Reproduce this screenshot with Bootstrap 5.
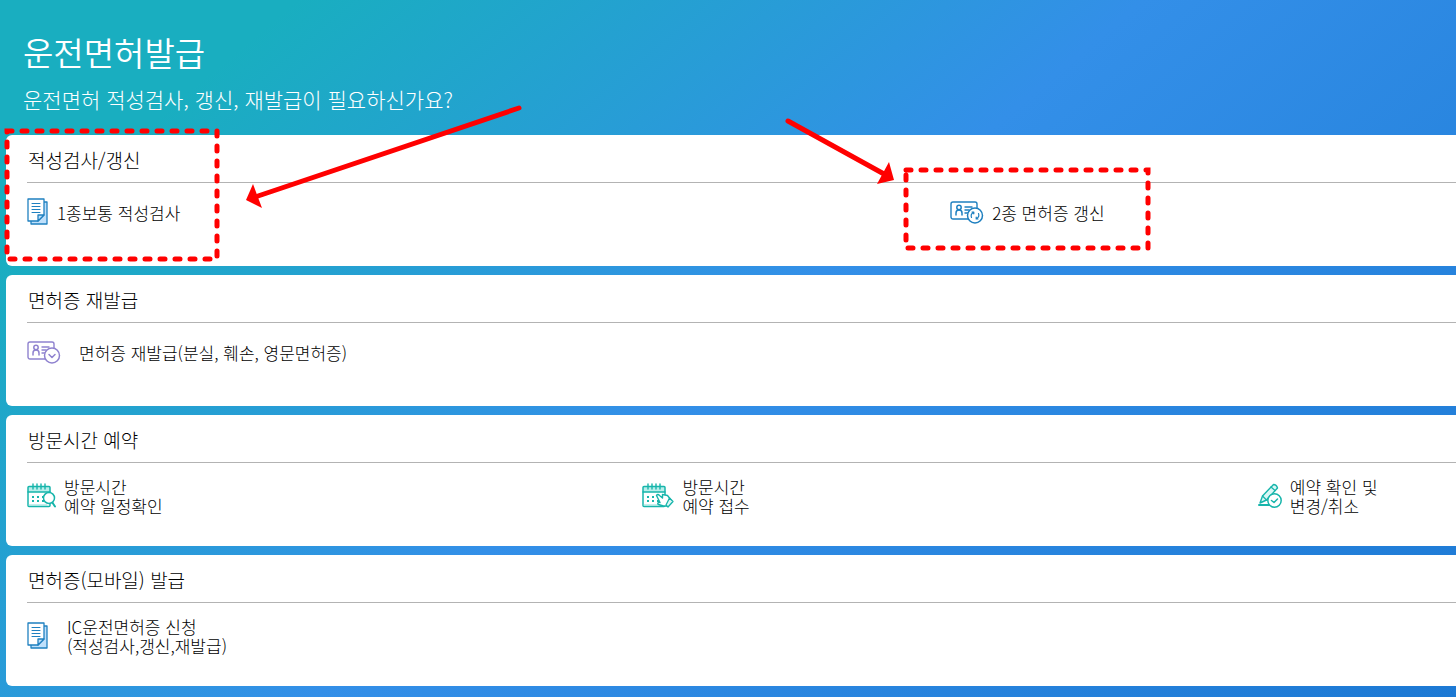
<!DOCTYPE html>
<html lang="ko">
<head>
<meta charset="utf-8">
<meta name="viewport" content="width=device-width, initial-scale=1">
<title>운전면허발급</title>
<link href="https://cdn.jsdelivr.net/npm/bootstrap@5.3.0/dist/css/bootstrap.min.css" rel="stylesheet">
<style>
  body { font-family: "Noto Sans CJK KR", sans-serif; font-weight: 300; color: #000; overflow-x: hidden; }
  .issue-page { background: linear-gradient(140deg, #19aec0 0%, #19aec0 13%, #338fe8 50%, #1c79d4 100%); padding: 30px 0 10px 6px; min-height: 100vh; }
  .issue-head { padding: 0 17px 21px; }
  .page-title { font-size: 33px; line-height: 44px; font-weight: 350; margin-bottom: 10px; }
  .page-desc { font-size: 21px; line-height: 30px; }
  .card-stack { gap: 9px; }
  .service-card { border: 0; border-radius: 6px 0 0 6px; min-height: 131px; padding: 7px 0 16px 21px; }
  .service-title { font-size: 19px; line-height: 36px; font-weight: 300; height: 41px; border-bottom: 1px solid #b3b3b3; margin: 0; padding-left: 1px; }
  /* the items are spread over a track wider than the visible card */
  .service-row { width: 129.2%; padding-top: 14px; }
  .service-link { color: #000; text-decoration: none; font-size: 17px; line-height: 19px; min-height: 30px; }
  .gap-wide { gap: 18px; }
  .ico { flex: none; fill: none; stroke: currentColor; stroke-linecap: round; stroke-linejoin: round; }
  .ico-blue { color: #1f80c0; }
  .ico-violet { color: #8f82cf; }
  .ico-teal { color: #17b5ab; }
  .marks { pointer-events: none; z-index: 2; }
</style>
</head>
<body>
<svg class="d-none" xmlns="http://www.w3.org/2000/svg">
  <symbol id="doc" viewBox="0 0 22 28">
    <path d="M4 4h16v22H4z" fill="#bfe0fb" stroke-width="1.3"/>
    <path d="M1 1h16v16l-6 6H1z" fill="#fff" stroke-width="1.3"/>
    <path d="M11 23v-6h6z" fill="#bfe0fb" stroke-width="1.3"/>
    <path d="M5 5.500h8M5 8.500h8M5 11.500h8M5 14.500h8" stroke-width="1"/>
  </symbol>
  <symbol id="idcard" viewBox="0 0 34 24">
    <rect x="1" y="2" width="26" height="17" rx="2" stroke-width="1.4"/>
    <circle cx="9" cy="7.500" r="2.200" stroke-width="1.5"/>
    <path d="M6 15v-2c0-2 1-3 3-3s3 1 3 3v2" stroke-width="1.5"/>
    <path d="M15 7h7M15 10h4M15 13h3" stroke-width="1.4"/>
    <circle cx="25" cy="15.500" r="7.500" fill="#fff" stroke-width="1.5"/>
  </symbol>
  <symbol id="calendar" viewBox="0 0 32 26">
    <path d="M1 4h22v5H1z" fill="#b9eeea" stroke="none"/>
    <rect x="1" y="3.500" width="22" height="20" rx="1" stroke-width="1.5"/>
    <path d="M1 9h22M6 1v5M10 1v5M14 1v5M18 1v5" stroke-width="1.4"/>
    <path d="M5 14h2M10 14h2M15 14h2M5 18h2M10 18h2M15 18h2" stroke-width="2" stroke-linecap="butt"/>
    <path d="M2 22h18" stroke="#8be0da" stroke-width="1"/>
  </symbol>
</svg>
<main class="issue-page position-relative overflow-hidden">
  <header class="issue-head text-white">
    <h1 class="page-title">운전면허발급</h1>
    <p class="page-desc mb-0">운전면허 적성검사, 갱신, 재발급이 필요하신가요?</p>
  </header>

  <div class="card-stack d-flex flex-column">
    <section class="service-card card overflow-hidden">
      <h2 class="service-title">적성검사/갱신</h2>
      <div class="service-row row row-cols-2 g-0">
        <div class="col"><a class="service-link d-inline-flex align-items-center gap-2" href="#">
          <svg class="ico ico-blue" width="22" height="28"><use href="#doc"/></svg>
          <span>1종보통 적성검사</span></a></div>
        <div class="col"><a class="service-link d-inline-flex align-items-center gap-2" href="#">
          <svg class="ico ico-blue" width="34" height="24"><use href="#idcard"/><path d="M21.500 17.500a4 4 0 0 1 2-5M22 12h1.800v1.800M28.500 13.500a4 4 0 0 1-2 5M28 19h-1.800v-1.800" stroke-width="1.200"/></svg>
          <span>2종 면허증 갱신</span></a></div>
      </div>
    </section>

    <section class="service-card card overflow-hidden">
      <h2 class="service-title">면허증 재발급</h2>
      <div class="service-row row row-cols-2 g-0">
        <div class="col"><a class="service-link gap-wide d-inline-flex align-items-center" href="#">
          <svg class="ico ico-violet" width="34" height="24"><use href="#idcard"/><path d="M22 14.500l3 3 3-3" stroke-width="1.5"/></svg>
          <span>면허증 재발급(분실, 훼손, 영문면허증)</span></a></div>
      </div>
    </section>

    <section class="service-card card overflow-hidden">
      <h2 class="service-title">방문시간 예약</h2>
      <div class="service-row row row-cols-3 g-0">
        <div class="col"><a class="service-link d-inline-flex align-items-center gap-2" href="#">
          <svg class="ico ico-teal" width="29" height="26" viewBox="0 0 29 26"><use href="#calendar" width="32" height="26"/><path d="M25 19l3 4.500" stroke-width="2"/><circle cx="22" cy="15" r="5.500" fill="#fff" stroke-width="1.5"/></svg>
          <span>방문시간<br>예약 일정확인</span></a></div>
        <div class="col"><a class="service-link d-inline-flex align-items-center gap-2" href="#">
          <svg class="ico ico-teal" width="32" height="26" viewBox="0 0 32 26"><use href="#calendar" width="32" height="26"/><path d="M14.500 12.500c1-1.500 2-1 3 0l3 2.500v-3.500l5 1 3.500 4.500-4.500 6h-3l-5-1.500c-1.500-1-.5-2.500 1.500-2z" fill="#fff" stroke-width="1.400"/><path d="M27.500 15l3.500 3.500-5 5.500-2-2z" fill="#d9f7f5" stroke-width="1.300"/></svg>
          <span>방문시간<br>예약 접수</span></a></div>
        <div class="col"><a class="service-link d-inline-flex align-items-center gap-2" href="#">
          <svg class="ico ico-teal" width="24" height="26" viewBox="0 0 24 26"><path d="M1 22h11" stroke-width="2"/><path d="M2 20l2.500-7L15.500 1.500q3 0 4 3.500L8.500 17z" fill="#d9f7f5" stroke-width="1.400"/><path d="M4.500 13L8.500 17M13 4l4 3.500" stroke-width="1.200"/><circle cx="16.500" cy="17.500" r="6.700" fill="#fff" stroke-width="1.500"/><path d="M13.500 17.500l2.500 2 3.500-3.500" stroke-width="1.500"/></svg>
          <span>예약 확인 및<br>변경/취소</span></a></div>
      </div>
    </section>

    <section class="service-card card overflow-hidden">
      <h2 class="service-title">면허증(모바일) 발급</h2>
      <div class="service-row row row-cols-2 g-0">
        <div class="col"><a class="service-link gap-wide d-inline-flex align-items-center" href="#">
          <svg class="ico ico-blue" width="22" height="28"><use href="#doc"/></svg>
          <span>IC운전면허증 신청<br>(적성검사,갱신,재발급)</span></a></div>
      </div>
    </section>
  </div>

  <!-- red callouts laid over the cards -->
  <svg class="marks position-absolute top-0 start-0 w-100 h-100" aria-hidden="true" fill="none" stroke="#f00" stroke-width="5" stroke-linecap="round">
    <path d="M7 131H217V259H7z" stroke-dasharray="5 10"/>
    <path d="M906 170H1148V248H906z" stroke-dasharray="5 10"/>
    <path d="M519 108L258 196M788 121L884 174"/>
    <path d="M246 200L253 184L262 208zM894 180L889 162L877 184z" fill="#f00" stroke="none"/>
  </svg>
</main>
<script src="https://cdn.jsdelivr.net/npm/bootstrap@5.3.0/dist/js/bootstrap.bundle.min.js"></script>
</body>
</html>
